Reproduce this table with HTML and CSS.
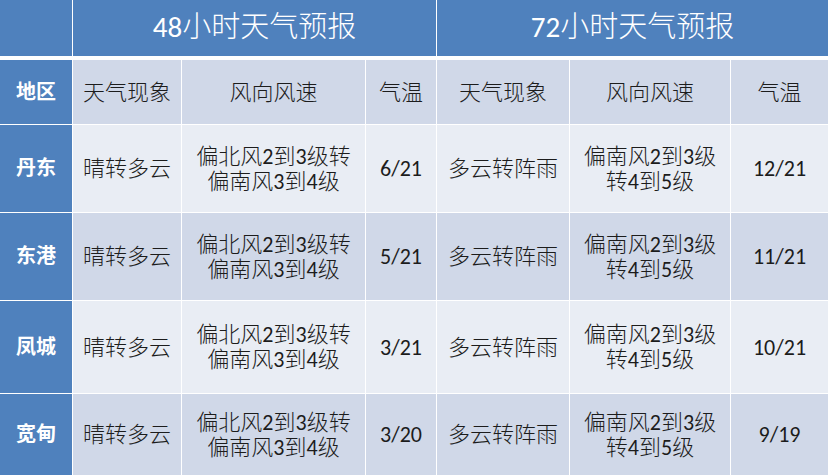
FILE: index.html
```html
<!DOCTYPE html>
<html lang="zh-CN">
<head>
<meta charset="utf-8">
<title>天气预报</title>
<link rel="stylesheet" href="styles.css">
</head>
<body>
<div class="table">
  <div class="cell blue top"></div>
  <div class="cell blue top title span3">48小时天气预报</div>
  <div class="cell blue top title span3">72小时天气预报</div>

  <div class="cell blue region">地区</div>
  <div class="cell dark">天气现象</div>
  <div class="cell dark">风向风速</div>
  <div class="cell dark">气温</div>
  <div class="cell dark">天气现象</div>
  <div class="cell dark">风向风速</div>
  <div class="cell dark">气温</div>

  <div class="cell blue region">丹东</div>
  <div class="cell light">晴转多云</div>
  <div class="cell light">偏北风2到3级转<br>偏南风3到4级</div>
  <div class="cell light">6/21</div>
  <div class="cell light">多云转阵雨</div>
  <div class="cell light">偏南风2到3级<br>转4到5级</div>
  <div class="cell light">12/21</div>

  <div class="cell blue region">东港</div>
  <div class="cell dark">晴转多云</div>
  <div class="cell dark">偏北风2到3级转<br>偏南风3到4级</div>
  <div class="cell dark">5/21</div>
  <div class="cell dark">多云转阵雨</div>
  <div class="cell dark">偏南风2到3级<br>转4到5级</div>
  <div class="cell dark">11/21</div>

  <div class="cell blue region">凤城</div>
  <div class="cell light">晴转多云</div>
  <div class="cell light">偏北风2到3级转<br>偏南风3到4级</div>
  <div class="cell light">3/21</div>
  <div class="cell light">多云转阵雨</div>
  <div class="cell light">偏南风2到3级<br>转4到5级</div>
  <div class="cell light">10/21</div>

  <div class="cell blue region">宽甸</div>
  <div class="cell dark">晴转多云</div>
  <div class="cell dark">偏北风2到3级转<br>偏南风3到4级</div>
  <div class="cell dark">3/20</div>
  <div class="cell dark">多云转阵雨</div>
  <div class="cell dark">偏南风2到3级<br>转4到5级</div>
  <div class="cell dark">9/19</div>
</div>
</body>
</html>
```

FILE: styles.css
```css
html, body {
  margin: 0;
  padding: 0;
  width: 828px;
  height: 475px;
  overflow: hidden;
  background: #ffffff;
}

.table {
  display: grid;
  grid-template-columns: 72px 108px 183px 70px 132px 160px 97px;
  grid-template-rows: 59px 64px 87px 87px 92px 81px;
  gap: 1px;
  width: 828px;
  height: 475px;
  background: #ffffff;
  font-family: "Carlito", "Lato", "Noto Sans CJK SC", sans-serif;
  font-size: 22px;
  font-weight: 300;
  line-height: 25px;
  color: #1c1c1c;
}

.cell {
  display: flex;
  align-items: center;
  justify-content: center;
  text-align: center;
}

.blue {
  background: #4f81bd;
  color: #ffffff;
}

.top {
  border-bottom: 3px solid #ffffff;
}

.title {
  font-size: 29px;
  line-height: 34px;
  padding-bottom: 2px;
}

.span3 {
  grid-column: span 3;
}

.region {
  font-size: 20px;
  font-weight: 700;
}

.dark {
  background: #d0d8e8;
}

.light {
  background: #e9edf4;
}
```
